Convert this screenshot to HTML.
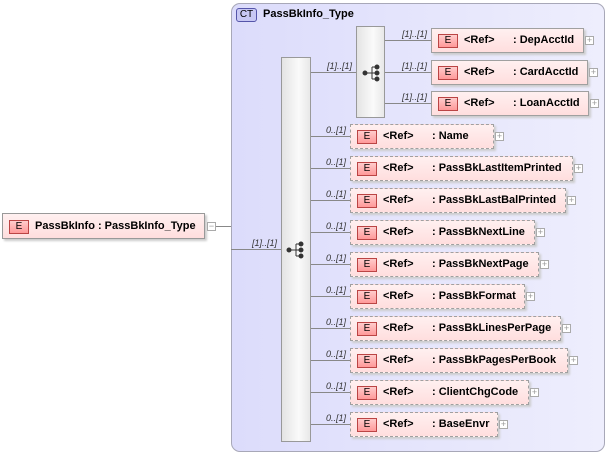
<!DOCTYPE html>
<html><head><meta charset="utf-8"><style>
*{margin:0;padding:0;box-sizing:border-box}
body{width:608px;height:454px;background:#fff;position:relative;overflow:hidden;font-family:"Liberation Sans",sans-serif;font-size:11px;color:#000}
.a{position:absolute}
.ct{left:231px;top:3px;width:374px;height:449px;border:1px solid #a8a8b8;border-radius:9px;background:linear-gradient(90deg,#dcdcfb,#eeeefd)}
.seq{background:linear-gradient(90deg,#e4e4e4,#fafafa 60%,#e8e8e8);border:1px solid #999}
.el{height:25px;background:linear-gradient(180deg,#fff0f0,#ffdede);border:1px solid #a0a0a0;box-shadow:2px 2px 2px #ccc;font-weight:bold;white-space:nowrap}
.el.d{border:1px dashed #a0a0a0}
.E{position:absolute;left:6px;top:5px;width:20px;height:14px;border:1px solid #b44;background:linear-gradient(180deg,#fcc,#f99);font-weight:normal;font-size:10px;text-align:center;line-height:12px}
.t{position:absolute;top:5px;line-height:13px}
.pl{width:9px;height:9px;border:1px solid #aaa;background:#fff;font-size:9px;line-height:7px;text-align:center;color:#999}
.ln{background:#888;height:1px}
.lb{font-size:9px;font-style:italic;color:#333}
</style></head><body>
<div class="a ct"></div>
<div class="a" style="left:236px;top:8px;width:21px;height:14px;border:1px solid #55a;border-radius:3px;background:#c8c8f4;font-size:10px;text-align:center;line-height:12px">CT</div>
<div class="a" style="left:263px;top:8px;font-weight:bold;line-height:13px">PassBkInfo_Type</div>

<div class="a el" style="left:2px;top:213px;width:203px;height:26px;border-color:#999"><div class="E" style="top:6px">E</div><div class="t" style="left:32px;top:6px">PassBkInfo : PassBkInfo_Type</div></div>
<div class="a pl" style="left:207px;top:222px">−</div>
<div class="a ln" style="left:216px;top:226px;width:15px"></div>
<div class="a ln" style="left:231px;top:249px;width:50px"></div>
<div class="a lb" style="left:252px;top:238px">[1]..[1]</div>

<div class="a seq" style="left:281px;top:57px;width:30px;height:385px"></div>
<svg class="a" style="left:286px;top:240px" width="20" height="20"><g fill="#333" stroke="#333"><circle cx="3" cy="10" r="2"/><line x1="3" y1="10" x2="10" y2="10"/><line x1="10" y1="4" x2="10" y2="16"/><line x1="10" y1="4" x2="14" y2="4"/><line x1="10" y1="16" x2="14" y2="16"/><line x1="10" y1="10" x2="14" y2="10"/><circle cx="15" cy="4" r="2"/><circle cx="15" cy="10" r="2"/><circle cx="15" cy="16" r="2"/></g></svg>

<div class="a ln" style="left:311px;top:72px;width:45px"></div>
<div class="a lb" style="left:327px;top:61px">[1]..[1]</div>
<div class="a seq" style="left:356px;top:26px;width:29px;height:92px"></div>
<svg class="a" style="left:362px;top:63px" width="20" height="20"><g fill="#333" stroke="#333"><circle cx="3" cy="10" r="2"/><line x1="3" y1="10" x2="10" y2="10"/><line x1="10" y1="4" x2="10" y2="16"/><line x1="10" y1="4" x2="14" y2="4"/><line x1="10" y1="16" x2="14" y2="16"/><line x1="10" y1="10" x2="14" y2="10"/><circle cx="15" cy="4" r="2"/><circle cx="15" cy="10" r="2"/><circle cx="15" cy="16" r="2"/></g></svg>

<div class="a ln" style="left:385px;top:40px;width:46px"></div><div class="a lb" style="left:402px;top:29px">[1]..[1]</div>
<div class="a el" style="left:431px;top:28px;width:153px"><div class="E">E</div><div class="t" style="left:32px">&lt;Ref&gt;</div><div class="t" style="left:81px">: DepAcctId</div></div>
<div class="a pl" style="left:585px;top:36px">+</div>
<div class="a ln" style="left:385px;top:72px;width:46px"></div><div class="a lb" style="left:402px;top:61px">[1]..[1]</div>
<div class="a el" style="left:431px;top:60px;width:157px"><div class="E">E</div><div class="t" style="left:32px">&lt;Ref&gt;</div><div class="t" style="left:81px">: CardAcctId</div></div>
<div class="a pl" style="left:589px;top:68px">+</div>
<div class="a ln" style="left:385px;top:103px;width:46px"></div><div class="a lb" style="left:402px;top:92px">[1]..[1]</div>
<div class="a el" style="left:431px;top:91px;width:158px"><div class="E">E</div><div class="t" style="left:32px">&lt;Ref&gt;</div><div class="t" style="left:81px">: LoanAcctId</div></div>
<div class="a pl" style="left:590px;top:99px">+</div>

<div class="a ln" style="left:311px;top:136px;width:39px"></div><div class="a lb" style="left:326px;top:125px">0..[1]</div>
<div class="a el d" style="left:350px;top:124px;width:144px"><div class="E">E</div><div class="t" style="left:32px">&lt;Ref&gt;</div><div class="t" style="left:81px">: Name</div></div><div class="a pl" style="left:495px;top:132px">+</div>
<div class="a ln" style="left:311px;top:168px;width:39px"></div><div class="a lb" style="left:326px;top:157px">0..[1]</div>
<div class="a el d" style="left:350px;top:156px;width:223px"><div class="E">E</div><div class="t" style="left:32px">&lt;Ref&gt;</div><div class="t" style="left:81px">: PassBkLastItemPrinted</div></div><div class="a pl" style="left:574px;top:164px">+</div>
<div class="a ln" style="left:311px;top:200px;width:39px"></div><div class="a lb" style="left:326px;top:189px">0..[1]</div>
<div class="a el d" style="left:350px;top:188px;width:216px"><div class="E">E</div><div class="t" style="left:32px">&lt;Ref&gt;</div><div class="t" style="left:81px">: PassBkLastBalPrinted</div></div><div class="a pl" style="left:567px;top:196px">+</div>
<div class="a ln" style="left:311px;top:232px;width:39px"></div><div class="a lb" style="left:326px;top:221px">0..[1]</div>
<div class="a el d" style="left:350px;top:220px;width:185px"><div class="E">E</div><div class="t" style="left:32px">&lt;Ref&gt;</div><div class="t" style="left:81px">: PassBkNextLine</div></div><div class="a pl" style="left:536px;top:228px">+</div>
<div class="a ln" style="left:311px;top:264px;width:39px"></div><div class="a lb" style="left:326px;top:253px">0..[1]</div>
<div class="a el d" style="left:350px;top:252px;width:189px"><div class="E">E</div><div class="t" style="left:32px">&lt;Ref&gt;</div><div class="t" style="left:81px">: PassBkNextPage</div></div><div class="a pl" style="left:540px;top:260px">+</div>
<div class="a ln" style="left:311px;top:296px;width:39px"></div><div class="a lb" style="left:326px;top:285px">0..[1]</div>
<div class="a el d" style="left:350px;top:284px;width:175px"><div class="E">E</div><div class="t" style="left:32px">&lt;Ref&gt;</div><div class="t" style="left:81px">: PassBkFormat</div></div><div class="a pl" style="left:526px;top:292px">+</div>
<div class="a ln" style="left:311px;top:328px;width:39px"></div><div class="a lb" style="left:326px;top:317px">0..[1]</div>
<div class="a el d" style="left:350px;top:316px;width:211px"><div class="E">E</div><div class="t" style="left:32px">&lt;Ref&gt;</div><div class="t" style="left:81px">: PassBkLinesPerPage</div></div><div class="a pl" style="left:562px;top:324px">+</div>
<div class="a ln" style="left:311px;top:360px;width:39px"></div><div class="a lb" style="left:326px;top:349px">0..[1]</div>
<div class="a el d" style="left:350px;top:348px;width:218px"><div class="E">E</div><div class="t" style="left:32px">&lt;Ref&gt;</div><div class="t" style="left:81px">: PassBkPagesPerBook</div></div><div class="a pl" style="left:569px;top:356px">+</div>
<div class="a ln" style="left:311px;top:392px;width:39px"></div><div class="a lb" style="left:326px;top:381px">0..[1]</div>
<div class="a el d" style="left:350px;top:380px;width:179px"><div class="E">E</div><div class="t" style="left:32px">&lt;Ref&gt;</div><div class="t" style="left:81px">: ClientChgCode</div></div><div class="a pl" style="left:530px;top:388px">+</div>
<div class="a ln" style="left:311px;top:424px;width:39px"></div><div class="a lb" style="left:326px;top:413px">0..[1]</div>
<div class="a el d" style="left:350px;top:412px;width:148px"><div class="E">E</div><div class="t" style="left:32px">&lt;Ref&gt;</div><div class="t" style="left:81px">: BaseEnvr</div></div><div class="a pl" style="left:499px;top:420px">+</div>
</body></html>
